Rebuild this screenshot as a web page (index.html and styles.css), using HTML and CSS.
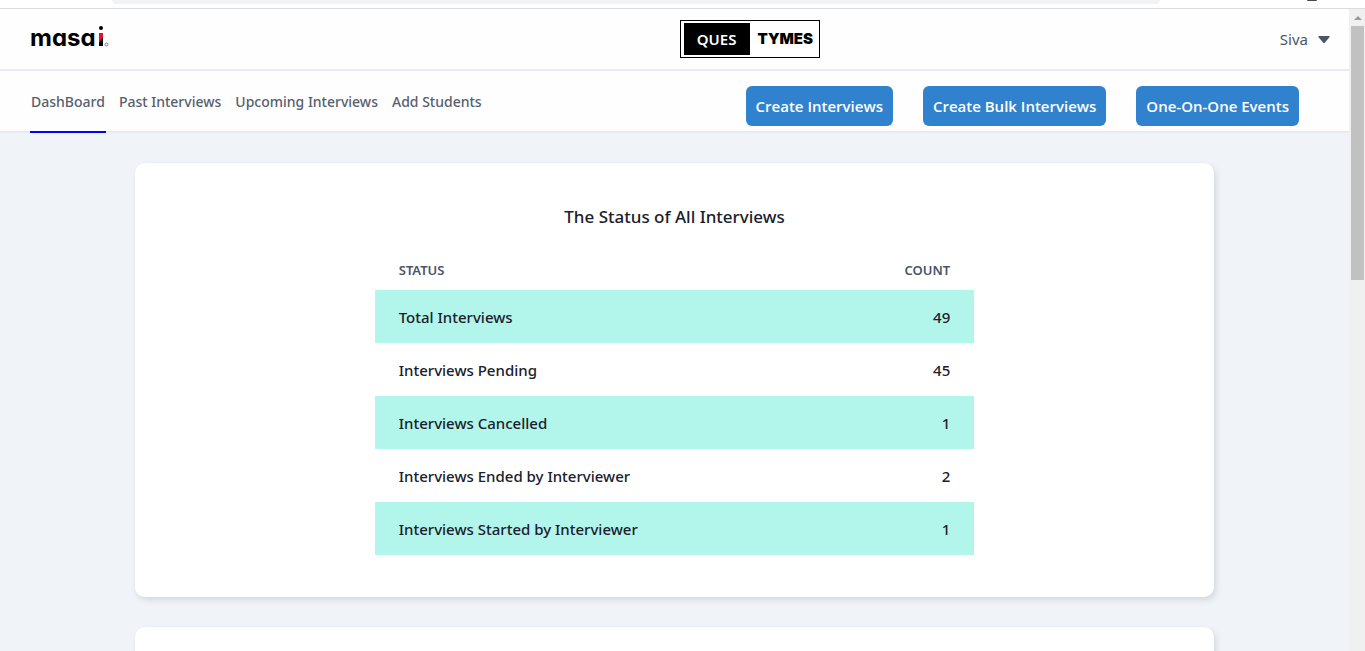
FILE: index.html
```html
<!DOCTYPE html>
<html lang="en">
<head>
<meta charset="utf-8">
<meta name="viewport" content="width=device-width, initial-scale=1">
<title>Ques Tymes</title>
<link rel="stylesheet" href="styles.css">
</head>
<body>
<div class="toolbar">
  <div class="address"></div>
  <div class="avatar"></div>
</div>
<div class="viewport">
  <div class="page">
    <header class="header">
      <a class="masai" href="#" aria-label="masai">
        <svg width="80" height="32" viewBox="0 0 80 32">
          <text class="masai-word" x="0" y="24">masa</text>
          <circle cx="71" cy="6" r="2"/>
          <path d="M69 11h4v13h-4z"/>
          <path class="masai-red" d="M69 11h4v4l-4 6z"/>
          <circle class="masai-mark" cx="76.500" cy="22.500" r="1.500"/>
        </svg>
      </a>
      <a class="brand" href="#"><span class="ques">QUES</span><span class="tymes">TYMES</span></a>
      <button class="user" type="button">Siva
        <svg width="12" height="7" viewBox="0 0 12 7"><path d="M1 0h10q1 .5.400 1.300L7 6.500q-1 1-2 0L.6 1.300Q0 .5 1 0z"/></svg>
      </button>
    </header>
    <div class="navbar">
      <nav class="links">
        <a class="link active" href="#">DashBoard</a>
        <a class="link" href="#">Past Interviews</a>
        <a class="link" href="#">Upcoming Interviews</a>
        <a class="link" href="#">Add Students</a>
      </nav>
      <div class="actions">
        <button class="action" type="button">Create Interviews</button>
        <button class="action" type="button">Create Bulk Interviews</button>
        <button class="action" type="button">One-On-One Events</button>
      </div>
    </div>
    <main class="main">
      <section class="card">
        <h1 class="title">The Status of All Interviews</h1>
        <table class="table">
          <thead><tr><th>STATUS</th><th class="num">COUNT</th></tr></thead>
          <tbody>
            <tr><td>Total Interviews</td><td class="num">49</td></tr>
            <tr><td>Interviews Pending</td><td class="num">45</td></tr>
            <tr><td>Interviews Cancelled</td><td class="num">1</td></tr>
            <tr><td>Interviews Ended by Interviewer</td><td class="num">2</td></tr>
            <tr><td>Interviews Started by Interviewer</td><td class="num">1</td></tr>
          </tbody>
        </table>
      </section>
      <section class="card"></section>
    </main>
  </div>
  <div class="scrollbar">
    <svg class="arrow" width="8" height="4" viewBox="0 0 8 4"><path d="M4 0l4 4H0z"/></svg>
    <div class="thumb"></div>
  </div>
</div>
</body>
</html>
```
FILE: styles.css
```css
* { box-sizing: border-box; }
body {
  margin: 0;
  height: 100vh;
  overflow: hidden;
  display: flex;
  flex-direction: column;
  background: #fff;
  color: #1a202c;
  font: 500 15px/24px "Noto Sans", "Open Sans", sans-serif;
}
a { color: inherit; text-decoration: none; }
button { font: inherit; border: 0; cursor: pointer; }
.toolbar {
  flex: none;
  height: 9px;
  padding: 0 48px 0 112px;
  display: flex;
  justify-content: space-between;
  border-bottom: 1px solid #dadce0;
}
.address { width: 1048px; height: 4px; background: #f1f3f4; border-radius: 0 0 8px 8px; }
.avatar { width: 10px; height: 1px; background: #4b4658; border-radius: 0 0 5px 5px; }
.viewport { flex: 1; min-height: 0; display: flex; }
.page { flex: 1; min-width: 0; overflow: hidden; background: #f0f4f9; }
.header {
  height: 62px;
  padding: 0 19px 0 30px;
  display: grid;
  grid-template-columns: 14fr auto 11fr;
  align-items: center;
  background: #fefefe;
  border-bottom: 2px solid #e9edf2;
}
.masai { justify-self: start; padding-bottom: 2px; }
.masai svg { display: block; overflow: visible; }
.masai-word { font: 700 24px Inter, sans-serif; font-feature-settings: "cv11"; }
.masai-red { fill: #ee0b3a; }
.masai-mark { fill: none; stroke: #777; }
.brand {
  width: 140px;
  height: 38px;
  padding: 2px 3px;
  display: flex;
  border: 1px solid #000;
  background: #fff;
  line-height: 32px;
}
.ques { width: 66px; background: #000; color: #fff; text-align: center; font-weight: 600; }
.tymes { flex: 1; padding-left: 8px; color: #000; font-family: Inter, sans-serif; font-weight: 900; }
.user {
  justify-self: end;
  padding: 0;
  display: flex;
  align-items: center;
  gap: 10px;
  background: none;
  color: #4a5568;
  font-weight: 400;
}
.user svg { fill: #4a5568; }
.navbar {
  height: 60px;
  padding: 0 50px 0 30px;
  display: flex;
  justify-content: space-between;
  background: #fefefe;
  box-shadow: 0 1px 2px #dfe4e9;
}
.links { display: flex; gap: 12px; white-space: nowrap; }
.link { height: 62px; padding: 19px 1px 0; color: #56606e; font-size: 14px; }
.active { border-bottom: 2px solid #00f; }
.actions { display: flex; gap: 30px; padding-top: 15px; white-space: nowrap; }
.action {
  height: 40px;
  padding: 0 10px;
  border-radius: 6px;
  background: #3182ce;
  color: #fff;
  font-family: "Open Sans", "Noto Sans", sans-serif;
  font-weight: 600;
}
.main { padding: 32px 10%; display: grid; gap: 30px; }
.card {
  min-height: 434px;
  padding: 40px;
  border-radius: 10px;
  background: #fff;
  box-shadow: 2px 3px 6px #d3d7dc;
}
.title { margin: 0; text-align: center; font-size: 17px; line-height: 27px; font-weight: 500; }
.table { width: 60%; margin: 20px auto 0; border-collapse: collapse; }
th { height: 40px; padding: 0 24px; text-align: left; color: #4a5568; font-size: 13px; font-weight: 600; }
td { height: 53px; padding: 0 24px; font-size: 15px; }
.num { text-align: right; }
tbody tr:nth-child(odd) { background: #b2f5ea; }
.scrollbar { flex: none; width: 16px; padding: 7px 0 0 2px; background: #f0f0f0; display: flex; flex-direction: column; gap: 6px; }
.arrow { flex: none; align-self: center; fill: #999; }
.thumb { width: 13px; height: 40%; background: #c1c1c1; }
```
